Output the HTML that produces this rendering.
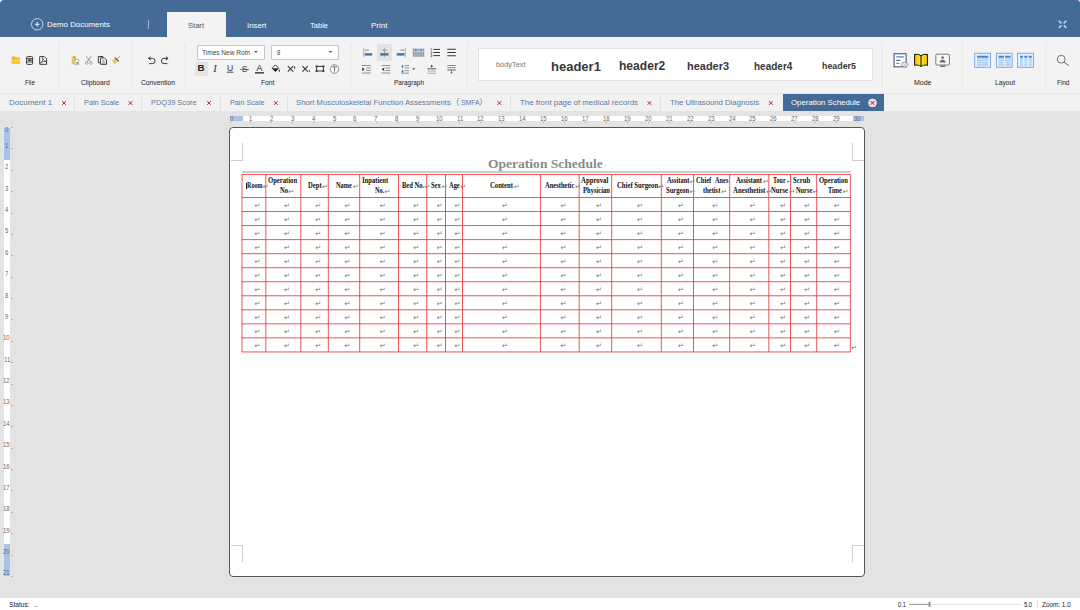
<!DOCTYPE html>
<html lang="en"><head><meta charset="utf-8"><title>Operation Schedule</title>
<style>
html,body{margin:0;padding:0;}
body{width:1080px;height:610px;overflow:hidden;position:relative;background:#e3e3e3;font-family:'Liberation Sans', sans-serif;}
.t{position:absolute;white-space:pre;}
.r{position:absolute;}
svg{position:absolute;overflow:visible;}
</style></head><body>
<div class="r" style="left:0px;top:0px;width:10.00px;height:10.00px;background:#fff;"></div>
<div class="r" style="left:1070px;top:0px;width:10.00px;height:10.00px;background:#fff;"></div>
<div class="r" style="left:0px;top:0px;width:1080.00px;height:36.60px;background:#446a96;border-radius:4px 3px 0 0;"></div>
<div class="r" style="left:166.5px;top:11.7px;width:59.10px;height:25.30px;background:#f3f3f3;"></div>
<span class="t" style="left:47.00px;top:19.80px;font:400 8px/9.6px 'Liberation Sans', sans-serif;transform:scaleX(0.9839);transform-origin:0 50%;color:#fff;">Demo Documents</span>
<span class="t" style="left:188.00px;top:21.00px;font:400 8px/9.6px 'Liberation Sans', sans-serif;transform:scaleX(0.9464);transform-origin:0 50%;color:#555;">Start</span>
<span class="t" style="left:247.00px;top:21.00px;font:400 8px/9.6px 'Liberation Sans', sans-serif;transform:scaleX(0.9742);transform-origin:0 50%;color:#fff;">Insert</span>
<span class="t" style="left:309.50px;top:21.00px;font:400 8px/9.6px 'Liberation Sans', sans-serif;transform:scaleX(0.9412);transform-origin:0 50%;color:#fff;">Table</span>
<span class="t" style="left:370.50px;top:21.00px;font:400 8px/9.6px 'Liberation Sans', sans-serif;transform:scaleX(1.0028);transform-origin:0 50%;color:#fff;">Print</span>
<div class="r" style="left:148px;top:19.5px;width:0.80px;height:9.00px;background:#a3b8d3;"></div>
<div class="r" style="left:0px;top:36.6px;width:1080.00px;height:56.90px;background:#f3f3f3;"></div>
<div class="r" style="left:0px;top:93px;width:1080.00px;height:1.00px;background:#e3e3e3;"></div>
<div class="r" style="left:0px;top:94px;width:1080.00px;height:17.30px;background:#f1f1f1;"></div>
<span class="t" style="left:24.70px;top:78.76px;font:400 6.9px/8.28px 'Liberation Sans', sans-serif;transform:scaleX(0.8821);transform-origin:0 50%;color:#222;">File</span>
<span class="t" style="left:81.20px;top:78.76px;font:400 6.9px/8.28px 'Liberation Sans', sans-serif;transform:scaleX(0.9763);transform-origin:0 50%;color:#222;">Clipboard</span>
<span class="t" style="left:141.30px;top:78.76px;font:400 6.9px/8.28px 'Liberation Sans', sans-serif;transform:scaleX(0.9749);transform-origin:0 50%;color:#222;">Convention</span>
<span class="t" style="left:261.20px;top:78.76px;font:400 6.9px/8.28px 'Liberation Sans', sans-serif;transform:scaleX(0.9785);transform-origin:0 50%;color:#222;">Font</span>
<span class="t" style="left:393.80px;top:78.76px;font:400 6.9px/8.28px 'Liberation Sans', sans-serif;transform:scaleX(0.9320);transform-origin:0 50%;color:#222;">Paragraph</span>
<span class="t" style="left:913.60px;top:78.76px;font:400 6.9px/8.28px 'Liberation Sans', sans-serif;transform:scaleX(1.0087);transform-origin:0 50%;color:#222;">Mode</span>
<span class="t" style="left:994.50px;top:78.76px;font:400 6.9px/8.28px 'Liberation Sans', sans-serif;transform:scaleX(0.9660);transform-origin:0 50%;color:#222;">Layout</span>
<span class="t" style="left:1056.80px;top:78.76px;font:400 6.9px/8.28px 'Liberation Sans', sans-serif;transform:scaleX(0.9249);transform-origin:0 50%;color:#222;">Find</span>
<div class="r" style="left:197px;top:45px;width:67.50px;height:14.50px;background:#fff;border:1px solid #c6c6c6;box-sizing:border-box;border-radius:1px;"></div>
<div class="r" style="left:271px;top:45px;width:67.70px;height:14.50px;background:#fff;border:1px solid #c6c6c6;box-sizing:border-box;border-radius:1px;"></div>
<span class="t" style="left:202.00px;top:49.06px;font:400 6.9px/8.28px 'Liberation Sans', sans-serif;transform:scaleX(0.9473);transform-origin:0 50%;color:#444;">Times New Rom</span>
<span class="t" style="left:276.70px;top:49.06px;font:400 6.9px/8.28px 'Liberation Sans', sans-serif;transform:scaleX(0.8585);transform-origin:0 50%;color:#444;">8</span>
<div class="r" style="left:477.5px;top:48.3px;width:395.50px;height:32.70px;background:#fff;border:1px solid #e2e2e2;box-sizing:border-box;"></div>
<span class="t" style="left:495.50px;top:60.44px;font:400 7.6px/9.12px 'Liberation Sans', sans-serif;transform:scaleX(0.9702);transform-origin:0 50%;color:#777;">bodyText</span>
<span class="t" style="left:550.50px;top:58.64px;font:700 13.6px/16.32px 'Liberation Sans', sans-serif;transform:scaleX(0.9570);transform-origin:0 50%;color:#383838;">header1</span>
<span class="t" style="left:618.70px;top:59.24px;font:700 12.6px/15.12px 'Liberation Sans', sans-serif;transform:scaleX(0.9583);transform-origin:0 50%;color:#383838;">header2</span>
<span class="t" style="left:686.50px;top:59.90px;font:700 11.5px/13.8px 'Liberation Sans', sans-serif;transform:scaleX(0.9544);transform-origin:0 50%;color:#383838;">header3</span>
<span class="t" style="left:754.00px;top:60.56px;font:700 10.4px/12.48px 'Liberation Sans', sans-serif;transform:scaleX(0.9634);transform-origin:0 50%;color:#383838;">header4</span>
<span class="t" style="left:822.00px;top:61.28px;font:700 9.2px/11.04px 'Liberation Sans', sans-serif;transform:scaleX(0.9645);transform-origin:0 50%;color:#383838;">header5</span>
<span class="t" style="left:8.90px;top:98.30px;font:400 8px/9.6px 'Liberation Sans', sans-serif;transform:scaleX(0.9991);transform-origin:0 50%;color:#5d789f;">Document 1</span>
<span class="t" style="left:84.00px;top:98.30px;font:400 8px/9.6px 'Liberation Sans', sans-serif;transform:scaleX(0.9150);transform-origin:0 50%;color:#5d789f;">Pain Scale</span>
<span class="t" style="left:151.40px;top:98.30px;font:400 8px/9.6px 'Liberation Sans', sans-serif;transform:scaleX(0.9238);transform-origin:0 50%;color:#5d789f;">PDQ39 Score</span>
<span class="t" style="left:229.50px;top:98.30px;font:400 8px/9.6px 'Liberation Sans', sans-serif;transform:scaleX(0.9020);transform-origin:0 50%;color:#5d789f;">Pain Scale</span>
<span class="t" style="left:519.50px;top:98.30px;font:400 8px/9.6px 'Liberation Sans', sans-serif;transform:scaleX(0.9864);transform-origin:0 50%;color:#5d789f;">The front page of medical records</span>
<span class="t" style="left:670.00px;top:98.30px;font:400 8px/9.6px 'Liberation Sans', sans-serif;transform:scaleX(0.9669);transform-origin:0 50%;color:#5d789f;">The Ultrasound Diagnosis</span>
<span class="t" style="left:296.00px;top:98.30px;font:400 8px/9.6px 'Liberation Sans', sans-serif;transform:scaleX(0.9644);transform-origin:0 50%;color:#5d789f;">Short Musculoskeletal Function Assessments</span>
<span class="t" style="left:451.40px;top:98.30px;font:400 8px/9.6px 'Liberation Sans', 'Noto Sans CJK SC', sans-serif;color:#5d789f;">（</span>
<span class="t" style="left:460.50px;top:98.30px;font:400 8px/9.6px 'Liberation Sans', sans-serif;transform:scaleX(0.8585);transform-origin:0 50%;color:#5d789f;">SMFA</span>
<span class="t" style="left:479.20px;top:98.30px;font:400 8px/9.6px 'Liberation Sans', 'Noto Sans CJK SC', sans-serif;color:#5d789f;">）</span>
<div class="r" style="left:782.5px;top:94px;width:101.00px;height:17.30px;background:#446a96;"></div>
<span class="t" style="left:791.40px;top:98.30px;font:400 8px/9.6px 'Liberation Sans', sans-serif;transform:scaleX(0.9785);transform-origin:0 50%;color:#fff;">Operation Schedule</span>
<div class="r" style="left:73.9px;top:96px;width:1.00px;height:15.00px;background:#e2e2e2;"></div>
<div class="r" style="left:141.2px;top:96px;width:1.00px;height:15.00px;background:#e2e2e2;"></div>
<div class="r" style="left:219.8px;top:96px;width:1.00px;height:15.00px;background:#e2e2e2;"></div>
<div class="r" style="left:286.5px;top:96px;width:1.00px;height:15.00px;background:#e2e2e2;"></div>
<div class="r" style="left:509.8px;top:96px;width:1.00px;height:15.00px;background:#e2e2e2;"></div>
<div class="r" style="left:660.0px;top:96px;width:1.00px;height:15.00px;background:#e2e2e2;"></div>
<div class="r" style="left:229.1px;top:127.2px;width:635.70px;height:450.00px;background:#fff;border:1px solid #555;box-sizing:border-box;border-radius:4px;"></div>
<div class="r" style="left:0px;top:597.7px;width:1080.00px;height:12.30px;background:#fff;"></div>
<span class="t" style="left:9.00px;top:601.06px;font:400 6.9px/8.28px 'Liberation Sans', sans-serif;transform:scaleX(0.9556);transform-origin:0 50%;color:#222;">Status:</span>
<span class="t" style="left:34.00px;top:601.06px;font:400 6.9px/8.28px 'Liberation Sans', sans-serif;transform:scaleX(1.0407);transform-origin:0 50%;color:#222;">..</span>
<span class="t" style="left:897.60px;top:601.06px;font:400 6.9px/8.28px 'Liberation Sans', sans-serif;transform:scaleX(0.8235);transform-origin:0 50%;color:#222;">0.1</span>
<span class="t" style="left:1024.00px;top:601.06px;font:400 6.9px/8.28px 'Liberation Sans', sans-serif;transform:scaleX(0.8339);transform-origin:0 50%;color:#222;">5.0</span>
<span class="t" style="left:1042.00px;top:601.06px;font:400 6.9px/8.28px 'Liberation Sans', sans-serif;transform:scaleX(0.9249);transform-origin:0 50%;color:#222;">Zoom: 1.0</span>
<div class="r" style="left:229.7px;top:115.5px;width:634.10px;height:5.80px;background:#fff;"></div>
<div class="r" style="left:229.7px;top:115.5px;width:13.10px;height:5.80px;background:#aac4e8;"></div>
<div class="r" style="left:852.5px;top:115.5px;width:11.30px;height:5.80px;background:#aac4e8;"></div>
<span class="t" style="left:230.34px;top:115.42px;font:400 6.8px/8.16px 'Liberation Sans', sans-serif;transform:scaleX(0.8800);transform-origin:0 50%;color:#666;">0</span>
<div class="r" style="left:229.9px;top:122.2px;width:0.80px;height:1.30px;background:#aaa;"></div>
<span class="t" style="left:248.84px;top:115.42px;font:400 6.8px/8.16px 'Liberation Sans', sans-serif;transform:scaleX(0.8800);transform-origin:0 50%;color:#666;">1</span>
<div class="r" style="left:250.1px;top:122.2px;width:0.80px;height:1.30px;background:#aaa;"></div>
<span class="t" style="left:269.77px;top:115.42px;font:400 6.8px/8.16px 'Liberation Sans', sans-serif;transform:scaleX(0.8800);transform-origin:0 50%;color:#666;">2</span>
<div class="r" style="left:271.03000000000003px;top:122.2px;width:0.80px;height:1.30px;background:#aaa;"></div>
<span class="t" style="left:290.70px;top:115.42px;font:400 6.8px/8.16px 'Liberation Sans', sans-serif;transform:scaleX(0.8800);transform-origin:0 50%;color:#666;">3</span>
<div class="r" style="left:291.96000000000004px;top:122.2px;width:0.80px;height:1.30px;background:#aaa;"></div>
<span class="t" style="left:311.63px;top:115.42px;font:400 6.8px/8.16px 'Liberation Sans', sans-serif;transform:scaleX(0.8800);transform-origin:0 50%;color:#666;">4</span>
<div class="r" style="left:312.89px;top:122.2px;width:0.80px;height:1.30px;background:#aaa;"></div>
<span class="t" style="left:332.56px;top:115.42px;font:400 6.8px/8.16px 'Liberation Sans', sans-serif;transform:scaleX(0.8800);transform-origin:0 50%;color:#666;">5</span>
<div class="r" style="left:333.82000000000005px;top:122.2px;width:0.80px;height:1.30px;background:#aaa;"></div>
<span class="t" style="left:353.49px;top:115.42px;font:400 6.8px/8.16px 'Liberation Sans', sans-serif;transform:scaleX(0.8800);transform-origin:0 50%;color:#666;">6</span>
<div class="r" style="left:354.75px;top:122.2px;width:0.80px;height:1.30px;background:#aaa;"></div>
<span class="t" style="left:374.42px;top:115.42px;font:400 6.8px/8.16px 'Liberation Sans', sans-serif;transform:scaleX(0.8800);transform-origin:0 50%;color:#666;">7</span>
<div class="r" style="left:375.68px;top:122.2px;width:0.80px;height:1.30px;background:#aaa;"></div>
<span class="t" style="left:395.35px;top:115.42px;font:400 6.8px/8.16px 'Liberation Sans', sans-serif;transform:scaleX(0.8800);transform-origin:0 50%;color:#666;">8</span>
<div class="r" style="left:396.61px;top:122.2px;width:0.80px;height:1.30px;background:#aaa;"></div>
<span class="t" style="left:416.28px;top:115.42px;font:400 6.8px/8.16px 'Liberation Sans', sans-serif;transform:scaleX(0.8800);transform-origin:0 50%;color:#666;">9</span>
<div class="r" style="left:417.54px;top:122.2px;width:0.80px;height:1.30px;background:#aaa;"></div>
<span class="t" style="left:435.54px;top:115.42px;font:400 6.8px/8.16px 'Liberation Sans', sans-serif;transform:scaleX(0.8800);transform-origin:0 50%;color:#666;">10</span>
<div class="r" style="left:438.47px;top:122.2px;width:0.80px;height:1.30px;background:#aaa;"></div>
<span class="t" style="left:456.69px;top:115.42px;font:400 6.8px/8.16px 'Liberation Sans', sans-serif;transform:scaleX(0.8800);transform-origin:0 50%;color:#666;">11</span>
<div class="r" style="left:459.4px;top:122.2px;width:0.80px;height:1.30px;background:#aaa;"></div>
<span class="t" style="left:477.40px;top:115.42px;font:400 6.8px/8.16px 'Liberation Sans', sans-serif;transform:scaleX(0.8800);transform-origin:0 50%;color:#666;">12</span>
<div class="r" style="left:480.33000000000004px;top:122.2px;width:0.80px;height:1.30px;background:#aaa;"></div>
<span class="t" style="left:498.33px;top:115.42px;font:400 6.8px/8.16px 'Liberation Sans', sans-serif;transform:scaleX(0.8800);transform-origin:0 50%;color:#666;">13</span>
<div class="r" style="left:501.26px;top:122.2px;width:0.80px;height:1.30px;background:#aaa;"></div>
<span class="t" style="left:519.26px;top:115.42px;font:400 6.8px/8.16px 'Liberation Sans', sans-serif;transform:scaleX(0.8800);transform-origin:0 50%;color:#666;">14</span>
<div class="r" style="left:522.1899999999999px;top:122.2px;width:0.80px;height:1.30px;background:#aaa;"></div>
<span class="t" style="left:540.19px;top:115.42px;font:400 6.8px/8.16px 'Liberation Sans', sans-serif;transform:scaleX(0.8800);transform-origin:0 50%;color:#666;">15</span>
<div class="r" style="left:543.12px;top:122.2px;width:0.80px;height:1.30px;background:#aaa;"></div>
<span class="t" style="left:561.12px;top:115.42px;font:400 6.8px/8.16px 'Liberation Sans', sans-serif;transform:scaleX(0.8800);transform-origin:0 50%;color:#666;">16</span>
<div class="r" style="left:564.0500000000001px;top:122.2px;width:0.80px;height:1.30px;background:#aaa;"></div>
<span class="t" style="left:582.05px;top:115.42px;font:400 6.8px/8.16px 'Liberation Sans', sans-serif;transform:scaleX(0.8800);transform-origin:0 50%;color:#666;">17</span>
<div class="r" style="left:584.98px;top:122.2px;width:0.80px;height:1.30px;background:#aaa;"></div>
<span class="t" style="left:602.98px;top:115.42px;font:400 6.8px/8.16px 'Liberation Sans', sans-serif;transform:scaleX(0.8800);transform-origin:0 50%;color:#666;">18</span>
<div class="r" style="left:605.91px;top:122.2px;width:0.80px;height:1.30px;background:#aaa;"></div>
<span class="t" style="left:623.91px;top:115.42px;font:400 6.8px/8.16px 'Liberation Sans', sans-serif;transform:scaleX(0.8800);transform-origin:0 50%;color:#666;">19</span>
<div class="r" style="left:626.84px;top:122.2px;width:0.80px;height:1.30px;background:#aaa;"></div>
<span class="t" style="left:644.84px;top:115.42px;font:400 6.8px/8.16px 'Liberation Sans', sans-serif;transform:scaleX(0.8800);transform-origin:0 50%;color:#666;">20</span>
<div class="r" style="left:647.7700000000001px;top:122.2px;width:0.80px;height:1.30px;background:#aaa;"></div>
<span class="t" style="left:665.77px;top:115.42px;font:400 6.8px/8.16px 'Liberation Sans', sans-serif;transform:scaleX(0.8800);transform-origin:0 50%;color:#666;">21</span>
<div class="r" style="left:668.6999999999999px;top:122.2px;width:0.80px;height:1.30px;background:#aaa;"></div>
<span class="t" style="left:686.70px;top:115.42px;font:400 6.8px/8.16px 'Liberation Sans', sans-serif;transform:scaleX(0.8800);transform-origin:0 50%;color:#666;">22</span>
<div class="r" style="left:689.63px;top:122.2px;width:0.80px;height:1.30px;background:#aaa;"></div>
<span class="t" style="left:707.63px;top:115.42px;font:400 6.8px/8.16px 'Liberation Sans', sans-serif;transform:scaleX(0.8800);transform-origin:0 50%;color:#666;">23</span>
<div class="r" style="left:710.5600000000001px;top:122.2px;width:0.80px;height:1.30px;background:#aaa;"></div>
<span class="t" style="left:728.56px;top:115.42px;font:400 6.8px/8.16px 'Liberation Sans', sans-serif;transform:scaleX(0.8800);transform-origin:0 50%;color:#666;">24</span>
<div class="r" style="left:731.49px;top:122.2px;width:0.80px;height:1.30px;background:#aaa;"></div>
<span class="t" style="left:749.49px;top:115.42px;font:400 6.8px/8.16px 'Liberation Sans', sans-serif;transform:scaleX(0.8800);transform-origin:0 50%;color:#666;">25</span>
<div class="r" style="left:752.42px;top:122.2px;width:0.80px;height:1.30px;background:#aaa;"></div>
<span class="t" style="left:770.42px;top:115.42px;font:400 6.8px/8.16px 'Liberation Sans', sans-serif;transform:scaleX(0.8800);transform-origin:0 50%;color:#666;">26</span>
<div class="r" style="left:773.35px;top:122.2px;width:0.80px;height:1.30px;background:#aaa;"></div>
<span class="t" style="left:791.35px;top:115.42px;font:400 6.8px/8.16px 'Liberation Sans', sans-serif;transform:scaleX(0.8800);transform-origin:0 50%;color:#666;">27</span>
<div class="r" style="left:794.2800000000001px;top:122.2px;width:0.80px;height:1.30px;background:#aaa;"></div>
<span class="t" style="left:812.28px;top:115.42px;font:400 6.8px/8.16px 'Liberation Sans', sans-serif;transform:scaleX(0.8800);transform-origin:0 50%;color:#666;">28</span>
<div class="r" style="left:815.2099999999999px;top:122.2px;width:0.80px;height:1.30px;background:#aaa;"></div>
<span class="t" style="left:833.21px;top:115.42px;font:400 6.8px/8.16px 'Liberation Sans', sans-serif;transform:scaleX(0.8800);transform-origin:0 50%;color:#666;">29</span>
<div class="r" style="left:836.14px;top:122.2px;width:0.80px;height:1.30px;background:#aaa;"></div>
<span class="t" style="left:854.14px;top:115.42px;font:400 6.8px/8.16px 'Liberation Sans', sans-serif;transform:scaleX(0.8800);transform-origin:0 50%;color:#666;">30</span>
<div class="r" style="left:857.07px;top:122.2px;width:0.80px;height:1.30px;background:#aaa;"></div>
<div class="r" style="left:3.9px;top:127.8px;width:6.20px;height:448.20px;background:#fff;"></div>
<div class="r" style="left:3.9px;top:127.8px;width:6.20px;height:32.00px;background:#aac4e8;"></div>
<div class="r" style="left:3.9px;top:543.9px;width:6.20px;height:32.10px;background:#aac4e8;"></div>
<span class="t" style="left:5.04px;top:125.92px;font:400 6.8px/8.16px 'Liberation Sans', sans-serif;transform:scaleX(0.8800);transform-origin:0 50%;color:#666;">0</span>
<div class="r" style="left:10.6px;top:127.0px;width:2.30px;height:0.80px;background:#b4b4b4;"></div>
<span class="t" style="left:5.04px;top:141.90px;font:400 6.8px/8.16px 'Liberation Sans', sans-serif;transform:scaleX(0.8800);transform-origin:0 50%;color:#666;">1</span>
<div class="r" style="left:10.6px;top:148.376px;width:2.30px;height:0.80px;background:#b4b4b4;"></div>
<span class="t" style="left:5.04px;top:163.27px;font:400 6.8px/8.16px 'Liberation Sans', sans-serif;transform:scaleX(0.8800);transform-origin:0 50%;color:#666;">2</span>
<div class="r" style="left:10.6px;top:169.752px;width:2.30px;height:0.80px;background:#b4b4b4;"></div>
<span class="t" style="left:5.04px;top:184.65px;font:400 6.8px/8.16px 'Liberation Sans', sans-serif;transform:scaleX(0.8800);transform-origin:0 50%;color:#666;">3</span>
<div class="r" style="left:10.6px;top:191.12800000000001px;width:2.30px;height:0.80px;background:#b4b4b4;"></div>
<span class="t" style="left:5.04px;top:206.02px;font:400 6.8px/8.16px 'Liberation Sans', sans-serif;transform:scaleX(0.8800);transform-origin:0 50%;color:#666;">4</span>
<div class="r" style="left:10.6px;top:212.504px;width:2.30px;height:0.80px;background:#b4b4b4;"></div>
<span class="t" style="left:5.04px;top:227.40px;font:400 6.8px/8.16px 'Liberation Sans', sans-serif;transform:scaleX(0.8800);transform-origin:0 50%;color:#666;">5</span>
<div class="r" style="left:10.6px;top:233.88000000000002px;width:2.30px;height:0.80px;background:#b4b4b4;"></div>
<span class="t" style="left:5.04px;top:248.78px;font:400 6.8px/8.16px 'Liberation Sans', sans-serif;transform:scaleX(0.8800);transform-origin:0 50%;color:#666;">6</span>
<div class="r" style="left:10.6px;top:255.256px;width:2.30px;height:0.80px;background:#b4b4b4;"></div>
<span class="t" style="left:5.04px;top:270.15px;font:400 6.8px/8.16px 'Liberation Sans', sans-serif;transform:scaleX(0.8800);transform-origin:0 50%;color:#666;">7</span>
<div class="r" style="left:10.6px;top:276.63200000000006px;width:2.30px;height:0.80px;background:#b4b4b4;"></div>
<span class="t" style="left:5.04px;top:291.53px;font:400 6.8px/8.16px 'Liberation Sans', sans-serif;transform:scaleX(0.8800);transform-origin:0 50%;color:#666;">8</span>
<div class="r" style="left:10.6px;top:298.00800000000004px;width:2.30px;height:0.80px;background:#b4b4b4;"></div>
<span class="t" style="left:5.04px;top:312.90px;font:400 6.8px/8.16px 'Liberation Sans', sans-serif;transform:scaleX(0.8800);transform-origin:0 50%;color:#666;">9</span>
<div class="r" style="left:10.6px;top:319.384px;width:2.30px;height:0.80px;background:#b4b4b4;"></div>
<span class="t" style="left:3.37px;top:334.28px;font:400 6.8px/8.16px 'Liberation Sans', sans-serif;transform:scaleX(0.8800);transform-origin:0 50%;color:#666;">10</span>
<div class="r" style="left:10.6px;top:340.76000000000005px;width:2.30px;height:0.80px;background:#b4b4b4;"></div>
<span class="t" style="left:3.59px;top:355.66px;font:400 6.8px/8.16px 'Liberation Sans', sans-serif;transform:scaleX(0.8800);transform-origin:0 50%;color:#666;">11</span>
<div class="r" style="left:10.6px;top:362.1360000000001px;width:2.30px;height:0.80px;background:#b4b4b4;"></div>
<span class="t" style="left:3.37px;top:377.03px;font:400 6.8px/8.16px 'Liberation Sans', sans-serif;transform:scaleX(0.8800);transform-origin:0 50%;color:#666;">12</span>
<div class="r" style="left:10.6px;top:383.51200000000006px;width:2.30px;height:0.80px;background:#b4b4b4;"></div>
<span class="t" style="left:3.37px;top:398.41px;font:400 6.8px/8.16px 'Liberation Sans', sans-serif;transform:scaleX(0.8800);transform-origin:0 50%;color:#666;">13</span>
<div class="r" style="left:10.6px;top:404.88800000000003px;width:2.30px;height:0.80px;background:#b4b4b4;"></div>
<span class="t" style="left:3.37px;top:419.78px;font:400 6.8px/8.16px 'Liberation Sans', sans-serif;transform:scaleX(0.8800);transform-origin:0 50%;color:#666;">14</span>
<div class="r" style="left:10.6px;top:426.264px;width:2.30px;height:0.80px;background:#b4b4b4;"></div>
<span class="t" style="left:3.37px;top:441.16px;font:400 6.8px/8.16px 'Liberation Sans', sans-serif;transform:scaleX(0.8800);transform-origin:0 50%;color:#666;">15</span>
<div class="r" style="left:10.6px;top:447.6400000000001px;width:2.30px;height:0.80px;background:#b4b4b4;"></div>
<span class="t" style="left:3.37px;top:462.54px;font:400 6.8px/8.16px 'Liberation Sans', sans-serif;transform:scaleX(0.8800);transform-origin:0 50%;color:#666;">16</span>
<div class="r" style="left:10.6px;top:469.0160000000001px;width:2.30px;height:0.80px;background:#b4b4b4;"></div>
<span class="t" style="left:3.37px;top:483.91px;font:400 6.8px/8.16px 'Liberation Sans', sans-serif;transform:scaleX(0.8800);transform-origin:0 50%;color:#666;">17</span>
<div class="r" style="left:10.6px;top:490.39200000000005px;width:2.30px;height:0.80px;background:#b4b4b4;"></div>
<span class="t" style="left:3.37px;top:505.29px;font:400 6.8px/8.16px 'Liberation Sans', sans-serif;transform:scaleX(0.8800);transform-origin:0 50%;color:#666;">18</span>
<div class="r" style="left:10.6px;top:511.76800000000003px;width:2.30px;height:0.80px;background:#b4b4b4;"></div>
<span class="t" style="left:3.37px;top:526.66px;font:400 6.8px/8.16px 'Liberation Sans', sans-serif;transform:scaleX(0.8800);transform-origin:0 50%;color:#666;">19</span>
<div class="r" style="left:10.6px;top:533.144px;width:2.30px;height:0.80px;background:#b4b4b4;"></div>
<span class="t" style="left:3.37px;top:548.04px;font:400 6.8px/8.16px 'Liberation Sans', sans-serif;transform:scaleX(0.8800);transform-origin:0 50%;color:#666;">20</span>
<div class="r" style="left:10.6px;top:554.5200000000001px;width:2.30px;height:0.80px;background:#b4b4b4;"></div>
<span class="t" style="left:3.37px;top:569.42px;font:400 6.8px/8.16px 'Liberation Sans', sans-serif;transform:scaleX(0.8800);transform-origin:0 50%;color:#666;">21</span>
<div class="r" style="left:10.6px;top:575.8960000000001px;width:2.30px;height:0.80px;background:#b4b4b4;"></div>
<div class="r" style="left:242.2px;top:142.5px;width:0.80px;height:17.80px;background:#cfcfcf;"></div>
<div class="r" style="left:230.5px;top:159.5px;width:12.50px;height:0.80px;background:#cfcfcf;"></div>
<div class="r" style="left:852px;top:142.5px;width:0.80px;height:17.80px;background:#cfcfcf;"></div>
<div class="r" style="left:852px;top:159.5px;width:11.50px;height:0.80px;background:#cfcfcf;"></div>
<div class="r" style="left:242.2px;top:545px;width:0.80px;height:16.80px;background:#cfcfcf;"></div>
<div class="r" style="left:230.5px;top:545px;width:12.50px;height:0.80px;background:#cfcfcf;"></div>
<div class="r" style="left:852px;top:545px;width:0.80px;height:16.80px;background:#cfcfcf;"></div>
<div class="r" style="left:852px;top:545px;width:11.50px;height:0.80px;background:#cfcfcf;"></div>
<div class="r" style="left:242px;top:171.4px;width:609.00px;height:1.50px;background:#cbcbcb;"></div>
<span class="t" style="left:488.30px;top:156.20px;font:700 13.5px/16.2px 'Liberation Serif', serif;transform:scaleX(1.0027);transform-origin:0 50%;color:#8a8a8a;">Operation Schedule</span>
<span class="t" style="left:604.2px;top:163.4px;font:400 3.6px/6px 'DejaVu Sans',sans-serif;color:#b5b5b5;">↵</span>
<svg width="1080" height="610" viewBox="0 0 1080 610" style="left:0;top:0"><path d="M241.60 174.50H850.70M241.60 197.50H850.70M241.60 211.54H850.70M241.60 225.58H850.70M241.60 239.62H850.70M241.60 253.66H850.70M241.60 267.70H850.70M241.60 281.74H850.70M241.60 295.78H850.70M241.60 309.82H850.70M241.60 323.86H850.70M241.60 337.90H850.70M241.60 351.94H850.70M242.00 174.50V351.94M265.80 174.50V351.94M300.80 174.50V351.94M328.30 174.50V351.94M359.70 174.50V351.94M398.50 174.50V351.94M426.70 174.50V351.94M445.50 174.50V351.94M462.50 174.50V351.94M540.40 174.50V351.94M579.20 174.50V351.94M611.70 174.50V351.94M661.30 174.50V351.94M693.50 174.50V351.94M729.70 174.50V351.94M768.80 174.50V351.94M790.50 174.50V351.94M816.70 174.50V351.94M850.30 174.50V351.94" stroke="#e5393c" stroke-width="0.85" fill="none"/></svg>
<span class="t" style="left:246.70px;top:181.88px;font:700 7.2px/8.64px 'Liberation Serif', serif;transform:scaleX(0.8435);transform-origin:0 50%;color:#111;">Room</span>
<span class="t" style="left:262.80px;top:182.60px;font:400 7.2px/8px 'DejaVu Sans',sans-serif;color:#7a7a7a;">↵</span>
<span class="t" style="left:268.40px;top:177.38px;font:700 7.2px/8.64px 'Liberation Serif', serif;transform:scaleX(0.9224);transform-origin:0 50%;color:#111;">Operation</span>
<span class="t" style="left:279.70px;top:186.78px;font:700 7.2px/8.64px 'Liberation Serif', serif;transform:scaleX(0.9094);transform-origin:0 50%;color:#111;">No</span>
<span class="t" style="left:288.30px;top:187.50px;font:400 7.2px/8px 'DejaVu Sans',sans-serif;color:#7a7a7a;">↵</span>
<span class="t" style="left:307.90px;top:181.88px;font:700 7.2px/8.64px 'Liberation Serif', serif;transform:scaleX(0.9201);transform-origin:0 50%;color:#111;">Dept</span>
<span class="t" style="left:322.10px;top:182.60px;font:400 7.2px/8px 'DejaVu Sans',sans-serif;color:#7a7a7a;">↵</span>
<span class="t" style="left:336.30px;top:181.88px;font:700 7.2px/8.64px 'Liberation Serif', serif;transform:scaleX(0.8793);transform-origin:0 50%;color:#111;">Name</span>
<span class="t" style="left:352.70px;top:182.60px;font:400 7.2px/8px 'DejaVu Sans',sans-serif;color:#7a7a7a;">↵</span>
<span class="t" style="left:361.90px;top:177.38px;font:700 7.2px/8.64px 'Liberation Serif', serif;transform:scaleX(0.9239);transform-origin:0 50%;color:#111;">Inpatient</span>
<span class="t" style="left:374.80px;top:186.78px;font:700 7.2px/8.64px 'Liberation Serif', serif;transform:scaleX(0.8684);transform-origin:0 50%;color:#111;">No.</span>
<span class="t" style="left:384.60px;top:187.50px;font:400 7.2px/8px 'DejaVu Sans',sans-serif;color:#7a7a7a;">↵</span>
<span class="t" style="left:401.70px;top:181.88px;font:700 7.2px/8.64px 'Liberation Serif', serif;transform:scaleX(0.9108);transform-origin:0 50%;color:#111;">Bed No.</span>
<span class="t" style="left:424.50px;top:182.60px;font:400 7.2px/8px 'DejaVu Sans',sans-serif;color:#7a7a7a;">↵</span>
<span class="t" style="left:431.30px;top:181.88px;font:700 7.2px/8.64px 'Liberation Serif', serif;transform:scaleX(0.8904);transform-origin:0 50%;color:#111;">Sex</span>
<span class="t" style="left:441.50px;top:182.60px;font:400 7.2px/8px 'DejaVu Sans',sans-serif;color:#7a7a7a;">↵</span>
<span class="t" style="left:449.00px;top:181.88px;font:700 7.2px/8.64px 'Liberation Serif', serif;transform:scaleX(0.8928);transform-origin:0 50%;color:#111;">Age</span>
<span class="t" style="left:460.30px;top:182.60px;font:400 7.2px/8px 'DejaVu Sans',sans-serif;color:#7a7a7a;">↵</span>
<span class="t" style="left:490.10px;top:181.88px;font:700 7.2px/8.64px 'Liberation Serif', serif;transform:scaleX(0.9287);transform-origin:0 50%;color:#111;">Content</span>
<span class="t" style="left:513.70px;top:182.60px;font:400 7.2px/8px 'DejaVu Sans',sans-serif;color:#7a7a7a;">↵</span>
<span class="t" style="left:545.00px;top:181.88px;font:700 7.2px/8.64px 'Liberation Serif', serif;transform:scaleX(0.9059);transform-origin:0 50%;color:#111;">Anesthetic</span>
<span class="t" style="left:574.90px;top:182.60px;font:400 7.2px/8px 'DejaVu Sans',sans-serif;color:#7a7a7a;">↵</span>
<span class="t" style="left:581.00px;top:177.38px;font:700 7.2px/8.64px 'Liberation Serif', serif;transform:scaleX(0.9404);transform-origin:0 50%;color:#111;">Approval</span>
<span class="t" style="left:583.10px;top:186.78px;font:700 7.2px/8.64px 'Liberation Serif', serif;transform:scaleX(0.9133);transform-origin:0 50%;color:#111;">Physician</span>
<span class="t" style="left:616.50px;top:181.88px;font:700 7.2px/8.64px 'Liberation Serif', serif;transform:scaleX(0.9334);transform-origin:0 50%;color:#111;">Chief Surgeon</span>
<span class="t" style="left:658.30px;top:182.60px;font:400 7.2px/8px 'DejaVu Sans',sans-serif;color:#7a7a7a;">↵</span>
<span class="t" style="left:666.60px;top:177.38px;font:700 7.2px/8.64px 'Liberation Serif', serif;transform:scaleX(0.8899);transform-origin:0 50%;color:#111;">Assitant</span>
<span class="t" style="left:689.60px;top:178.10px;font:400 7.2px/8px 'DejaVu Sans',sans-serif;color:#7a7a7a;">↵</span>
<span class="t" style="left:665.80px;top:186.78px;font:700 7.2px/8.64px 'Liberation Serif', serif;transform:scaleX(0.9076);transform-origin:0 50%;color:#111;">Surgeon</span>
<span class="t" style="left:689.60px;top:187.50px;font:400 7.2px/8px 'DejaVu Sans',sans-serif;color:#7a7a7a;">↵</span>
<span class="t" style="left:696.00px;top:177.38px;font:700 7.2px/8.64px 'Liberation Serif', serif;transform:scaleX(0.9117);transform-origin:0 50%;color:#111;">Chief</span>
<span class="t" style="left:715.20px;top:177.38px;font:700 7.2px/8.64px 'Liberation Serif', serif;transform:scaleX(0.8823);transform-origin:0 50%;color:#111;">Anes</span>
<span class="t" style="left:703.40px;top:186.78px;font:700 7.2px/8.64px 'Liberation Serif', serif;transform:scaleX(0.9024);transform-origin:0 50%;color:#111;">thetist</span>
<span class="t" style="left:721.30px;top:187.50px;font:400 7.2px/8px 'DejaVu Sans',sans-serif;color:#7a7a7a;">↵</span>
<span class="t" style="left:736.40px;top:177.38px;font:700 7.2px/8.64px 'Liberation Serif', serif;transform:scaleX(0.9296);transform-origin:0 50%;color:#111;">Assistant</span>
<span class="t" style="left:763.00px;top:178.10px;font:400 7.2px/8px 'DejaVu Sans',sans-serif;color:#7a7a7a;">↵</span>
<span class="t" style="left:733.30px;top:186.78px;font:700 7.2px/8.64px 'Liberation Serif', serif;transform:scaleX(0.9405);transform-origin:0 50%;color:#111;">Anesthetist</span>
<span class="t" style="left:766.20px;top:187.50px;font:400 7.2px/8px 'DejaVu Sans',sans-serif;color:#7a7a7a;">↵</span>
<span class="t" style="left:773.40px;top:177.38px;font:700 7.2px/8.64px 'Liberation Serif', serif;transform:scaleX(0.8444);transform-origin:0 50%;color:#111;">Tour</span>
<span class="t" style="left:786.60px;top:178.10px;font:400 7.2px/8px 'DejaVu Sans',sans-serif;color:#7a7a7a;">↵</span>
<span class="t" style="left:771.40px;top:186.78px;font:700 7.2px/8.64px 'Liberation Serif', serif;transform:scaleX(0.9252);transform-origin:0 50%;color:#111;">Nurse</span>
<span class="t" style="left:789.00px;top:187.50px;font:400 7.2px/8px 'DejaVu Sans',sans-serif;color:#7a7a7a;">↵</span>
<span class="t" style="left:793.10px;top:177.38px;font:700 7.2px/8.64px 'Liberation Serif', serif;transform:scaleX(0.9415);transform-origin:0 50%;color:#111;">Scrub</span>
<span class="t" style="left:795.80px;top:186.78px;font:700 7.2px/8.64px 'Liberation Serif', serif;transform:scaleX(0.8816);transform-origin:0 50%;color:#111;">Nurse</span>
<span class="t" style="left:812.60px;top:187.50px;font:400 7.2px/8px 'DejaVu Sans',sans-serif;color:#7a7a7a;">↵</span>
<span class="t" style="left:819.00px;top:177.38px;font:700 7.2px/8.64px 'Liberation Serif', serif;transform:scaleX(0.9161);transform-origin:0 50%;color:#111;">Operation</span>
<span class="t" style="left:828.00px;top:186.78px;font:700 7.2px/8.64px 'Liberation Serif', serif;transform:scaleX(0.8773);transform-origin:0 50%;color:#111;">Time</span>
<span class="t" style="left:842.50px;top:187.50px;font:400 7.2px/8px 'DejaVu Sans',sans-serif;color:#7a7a7a;">↵</span>
<div class="r" style="left:246.4px;top:183px;width:0.80px;height:5.80px;background:#111;"></div>
<span class="t" style="left:254.50px;top:201.82px;font:400 7.2px/8px 'DejaVu Sans',sans-serif;color:#7a7a7a;">↵</span>
<span class="t" style="left:283.90px;top:201.82px;font:400 7.2px/8px 'DejaVu Sans',sans-serif;color:#7a7a7a;">↵</span>
<span class="t" style="left:315.15px;top:201.82px;font:400 7.2px/8px 'DejaVu Sans',sans-serif;color:#7a7a7a;">↵</span>
<span class="t" style="left:344.60px;top:201.82px;font:400 7.2px/8px 'DejaVu Sans',sans-serif;color:#7a7a7a;">↵</span>
<span class="t" style="left:379.70px;top:201.82px;font:400 7.2px/8px 'DejaVu Sans',sans-serif;color:#7a7a7a;">↵</span>
<span class="t" style="left:413.20px;top:201.82px;font:400 7.2px/8px 'DejaVu Sans',sans-serif;color:#7a7a7a;">↵</span>
<span class="t" style="left:436.70px;top:201.82px;font:400 7.2px/8px 'DejaVu Sans',sans-serif;color:#7a7a7a;">↵</span>
<span class="t" style="left:454.60px;top:201.82px;font:400 7.2px/8px 'DejaVu Sans',sans-serif;color:#7a7a7a;">↵</span>
<span class="t" style="left:502.05px;top:201.82px;font:400 7.2px/8px 'DejaVu Sans',sans-serif;color:#7a7a7a;">↵</span>
<span class="t" style="left:560.40px;top:201.82px;font:400 7.2px/8px 'DejaVu Sans',sans-serif;color:#7a7a7a;">↵</span>
<span class="t" style="left:596.05px;top:201.82px;font:400 7.2px/8px 'DejaVu Sans',sans-serif;color:#7a7a7a;">↵</span>
<span class="t" style="left:637.10px;top:201.82px;font:400 7.2px/8px 'DejaVu Sans',sans-serif;color:#7a7a7a;">↵</span>
<span class="t" style="left:678.00px;top:201.82px;font:400 7.2px/8px 'DejaVu Sans',sans-serif;color:#7a7a7a;">↵</span>
<span class="t" style="left:712.20px;top:201.82px;font:400 7.2px/8px 'DejaVu Sans',sans-serif;color:#7a7a7a;">↵</span>
<span class="t" style="left:749.85px;top:201.82px;font:400 7.2px/8px 'DejaVu Sans',sans-serif;color:#7a7a7a;">↵</span>
<span class="t" style="left:780.25px;top:201.82px;font:400 7.2px/8px 'DejaVu Sans',sans-serif;color:#7a7a7a;">↵</span>
<span class="t" style="left:804.20px;top:201.82px;font:400 7.2px/8px 'DejaVu Sans',sans-serif;color:#7a7a7a;">↵</span>
<span class="t" style="left:834.10px;top:201.82px;font:400 7.2px/8px 'DejaVu Sans',sans-serif;color:#7a7a7a;">↵</span>
<span class="t" style="left:254.50px;top:215.86px;font:400 7.2px/8px 'DejaVu Sans',sans-serif;color:#7a7a7a;">↵</span>
<span class="t" style="left:283.90px;top:215.86px;font:400 7.2px/8px 'DejaVu Sans',sans-serif;color:#7a7a7a;">↵</span>
<span class="t" style="left:315.15px;top:215.86px;font:400 7.2px/8px 'DejaVu Sans',sans-serif;color:#7a7a7a;">↵</span>
<span class="t" style="left:344.60px;top:215.86px;font:400 7.2px/8px 'DejaVu Sans',sans-serif;color:#7a7a7a;">↵</span>
<span class="t" style="left:379.70px;top:215.86px;font:400 7.2px/8px 'DejaVu Sans',sans-serif;color:#7a7a7a;">↵</span>
<span class="t" style="left:413.20px;top:215.86px;font:400 7.2px/8px 'DejaVu Sans',sans-serif;color:#7a7a7a;">↵</span>
<span class="t" style="left:436.70px;top:215.86px;font:400 7.2px/8px 'DejaVu Sans',sans-serif;color:#7a7a7a;">↵</span>
<span class="t" style="left:454.60px;top:215.86px;font:400 7.2px/8px 'DejaVu Sans',sans-serif;color:#7a7a7a;">↵</span>
<span class="t" style="left:502.05px;top:215.86px;font:400 7.2px/8px 'DejaVu Sans',sans-serif;color:#7a7a7a;">↵</span>
<span class="t" style="left:560.40px;top:215.86px;font:400 7.2px/8px 'DejaVu Sans',sans-serif;color:#7a7a7a;">↵</span>
<span class="t" style="left:596.05px;top:215.86px;font:400 7.2px/8px 'DejaVu Sans',sans-serif;color:#7a7a7a;">↵</span>
<span class="t" style="left:637.10px;top:215.86px;font:400 7.2px/8px 'DejaVu Sans',sans-serif;color:#7a7a7a;">↵</span>
<span class="t" style="left:678.00px;top:215.86px;font:400 7.2px/8px 'DejaVu Sans',sans-serif;color:#7a7a7a;">↵</span>
<span class="t" style="left:712.20px;top:215.86px;font:400 7.2px/8px 'DejaVu Sans',sans-serif;color:#7a7a7a;">↵</span>
<span class="t" style="left:749.85px;top:215.86px;font:400 7.2px/8px 'DejaVu Sans',sans-serif;color:#7a7a7a;">↵</span>
<span class="t" style="left:780.25px;top:215.86px;font:400 7.2px/8px 'DejaVu Sans',sans-serif;color:#7a7a7a;">↵</span>
<span class="t" style="left:804.20px;top:215.86px;font:400 7.2px/8px 'DejaVu Sans',sans-serif;color:#7a7a7a;">↵</span>
<span class="t" style="left:834.10px;top:215.86px;font:400 7.2px/8px 'DejaVu Sans',sans-serif;color:#7a7a7a;">↵</span>
<span class="t" style="left:254.50px;top:229.90px;font:400 7.2px/8px 'DejaVu Sans',sans-serif;color:#7a7a7a;">↵</span>
<span class="t" style="left:283.90px;top:229.90px;font:400 7.2px/8px 'DejaVu Sans',sans-serif;color:#7a7a7a;">↵</span>
<span class="t" style="left:315.15px;top:229.90px;font:400 7.2px/8px 'DejaVu Sans',sans-serif;color:#7a7a7a;">↵</span>
<span class="t" style="left:344.60px;top:229.90px;font:400 7.2px/8px 'DejaVu Sans',sans-serif;color:#7a7a7a;">↵</span>
<span class="t" style="left:379.70px;top:229.90px;font:400 7.2px/8px 'DejaVu Sans',sans-serif;color:#7a7a7a;">↵</span>
<span class="t" style="left:413.20px;top:229.90px;font:400 7.2px/8px 'DejaVu Sans',sans-serif;color:#7a7a7a;">↵</span>
<span class="t" style="left:436.70px;top:229.90px;font:400 7.2px/8px 'DejaVu Sans',sans-serif;color:#7a7a7a;">↵</span>
<span class="t" style="left:454.60px;top:229.90px;font:400 7.2px/8px 'DejaVu Sans',sans-serif;color:#7a7a7a;">↵</span>
<span class="t" style="left:502.05px;top:229.90px;font:400 7.2px/8px 'DejaVu Sans',sans-serif;color:#7a7a7a;">↵</span>
<span class="t" style="left:560.40px;top:229.90px;font:400 7.2px/8px 'DejaVu Sans',sans-serif;color:#7a7a7a;">↵</span>
<span class="t" style="left:596.05px;top:229.90px;font:400 7.2px/8px 'DejaVu Sans',sans-serif;color:#7a7a7a;">↵</span>
<span class="t" style="left:637.10px;top:229.90px;font:400 7.2px/8px 'DejaVu Sans',sans-serif;color:#7a7a7a;">↵</span>
<span class="t" style="left:678.00px;top:229.90px;font:400 7.2px/8px 'DejaVu Sans',sans-serif;color:#7a7a7a;">↵</span>
<span class="t" style="left:712.20px;top:229.90px;font:400 7.2px/8px 'DejaVu Sans',sans-serif;color:#7a7a7a;">↵</span>
<span class="t" style="left:749.85px;top:229.90px;font:400 7.2px/8px 'DejaVu Sans',sans-serif;color:#7a7a7a;">↵</span>
<span class="t" style="left:780.25px;top:229.90px;font:400 7.2px/8px 'DejaVu Sans',sans-serif;color:#7a7a7a;">↵</span>
<span class="t" style="left:804.20px;top:229.90px;font:400 7.2px/8px 'DejaVu Sans',sans-serif;color:#7a7a7a;">↵</span>
<span class="t" style="left:834.10px;top:229.90px;font:400 7.2px/8px 'DejaVu Sans',sans-serif;color:#7a7a7a;">↵</span>
<span class="t" style="left:254.50px;top:243.94px;font:400 7.2px/8px 'DejaVu Sans',sans-serif;color:#7a7a7a;">↵</span>
<span class="t" style="left:283.90px;top:243.94px;font:400 7.2px/8px 'DejaVu Sans',sans-serif;color:#7a7a7a;">↵</span>
<span class="t" style="left:315.15px;top:243.94px;font:400 7.2px/8px 'DejaVu Sans',sans-serif;color:#7a7a7a;">↵</span>
<span class="t" style="left:344.60px;top:243.94px;font:400 7.2px/8px 'DejaVu Sans',sans-serif;color:#7a7a7a;">↵</span>
<span class="t" style="left:379.70px;top:243.94px;font:400 7.2px/8px 'DejaVu Sans',sans-serif;color:#7a7a7a;">↵</span>
<span class="t" style="left:413.20px;top:243.94px;font:400 7.2px/8px 'DejaVu Sans',sans-serif;color:#7a7a7a;">↵</span>
<span class="t" style="left:436.70px;top:243.94px;font:400 7.2px/8px 'DejaVu Sans',sans-serif;color:#7a7a7a;">↵</span>
<span class="t" style="left:454.60px;top:243.94px;font:400 7.2px/8px 'DejaVu Sans',sans-serif;color:#7a7a7a;">↵</span>
<span class="t" style="left:502.05px;top:243.94px;font:400 7.2px/8px 'DejaVu Sans',sans-serif;color:#7a7a7a;">↵</span>
<span class="t" style="left:560.40px;top:243.94px;font:400 7.2px/8px 'DejaVu Sans',sans-serif;color:#7a7a7a;">↵</span>
<span class="t" style="left:596.05px;top:243.94px;font:400 7.2px/8px 'DejaVu Sans',sans-serif;color:#7a7a7a;">↵</span>
<span class="t" style="left:637.10px;top:243.94px;font:400 7.2px/8px 'DejaVu Sans',sans-serif;color:#7a7a7a;">↵</span>
<span class="t" style="left:678.00px;top:243.94px;font:400 7.2px/8px 'DejaVu Sans',sans-serif;color:#7a7a7a;">↵</span>
<span class="t" style="left:712.20px;top:243.94px;font:400 7.2px/8px 'DejaVu Sans',sans-serif;color:#7a7a7a;">↵</span>
<span class="t" style="left:749.85px;top:243.94px;font:400 7.2px/8px 'DejaVu Sans',sans-serif;color:#7a7a7a;">↵</span>
<span class="t" style="left:780.25px;top:243.94px;font:400 7.2px/8px 'DejaVu Sans',sans-serif;color:#7a7a7a;">↵</span>
<span class="t" style="left:804.20px;top:243.94px;font:400 7.2px/8px 'DejaVu Sans',sans-serif;color:#7a7a7a;">↵</span>
<span class="t" style="left:834.10px;top:243.94px;font:400 7.2px/8px 'DejaVu Sans',sans-serif;color:#7a7a7a;">↵</span>
<span class="t" style="left:254.50px;top:257.98px;font:400 7.2px/8px 'DejaVu Sans',sans-serif;color:#7a7a7a;">↵</span>
<span class="t" style="left:283.90px;top:257.98px;font:400 7.2px/8px 'DejaVu Sans',sans-serif;color:#7a7a7a;">↵</span>
<span class="t" style="left:315.15px;top:257.98px;font:400 7.2px/8px 'DejaVu Sans',sans-serif;color:#7a7a7a;">↵</span>
<span class="t" style="left:344.60px;top:257.98px;font:400 7.2px/8px 'DejaVu Sans',sans-serif;color:#7a7a7a;">↵</span>
<span class="t" style="left:379.70px;top:257.98px;font:400 7.2px/8px 'DejaVu Sans',sans-serif;color:#7a7a7a;">↵</span>
<span class="t" style="left:413.20px;top:257.98px;font:400 7.2px/8px 'DejaVu Sans',sans-serif;color:#7a7a7a;">↵</span>
<span class="t" style="left:436.70px;top:257.98px;font:400 7.2px/8px 'DejaVu Sans',sans-serif;color:#7a7a7a;">↵</span>
<span class="t" style="left:454.60px;top:257.98px;font:400 7.2px/8px 'DejaVu Sans',sans-serif;color:#7a7a7a;">↵</span>
<span class="t" style="left:502.05px;top:257.98px;font:400 7.2px/8px 'DejaVu Sans',sans-serif;color:#7a7a7a;">↵</span>
<span class="t" style="left:560.40px;top:257.98px;font:400 7.2px/8px 'DejaVu Sans',sans-serif;color:#7a7a7a;">↵</span>
<span class="t" style="left:596.05px;top:257.98px;font:400 7.2px/8px 'DejaVu Sans',sans-serif;color:#7a7a7a;">↵</span>
<span class="t" style="left:637.10px;top:257.98px;font:400 7.2px/8px 'DejaVu Sans',sans-serif;color:#7a7a7a;">↵</span>
<span class="t" style="left:678.00px;top:257.98px;font:400 7.2px/8px 'DejaVu Sans',sans-serif;color:#7a7a7a;">↵</span>
<span class="t" style="left:712.20px;top:257.98px;font:400 7.2px/8px 'DejaVu Sans',sans-serif;color:#7a7a7a;">↵</span>
<span class="t" style="left:749.85px;top:257.98px;font:400 7.2px/8px 'DejaVu Sans',sans-serif;color:#7a7a7a;">↵</span>
<span class="t" style="left:780.25px;top:257.98px;font:400 7.2px/8px 'DejaVu Sans',sans-serif;color:#7a7a7a;">↵</span>
<span class="t" style="left:804.20px;top:257.98px;font:400 7.2px/8px 'DejaVu Sans',sans-serif;color:#7a7a7a;">↵</span>
<span class="t" style="left:834.10px;top:257.98px;font:400 7.2px/8px 'DejaVu Sans',sans-serif;color:#7a7a7a;">↵</span>
<span class="t" style="left:254.50px;top:272.02px;font:400 7.2px/8px 'DejaVu Sans',sans-serif;color:#7a7a7a;">↵</span>
<span class="t" style="left:283.90px;top:272.02px;font:400 7.2px/8px 'DejaVu Sans',sans-serif;color:#7a7a7a;">↵</span>
<span class="t" style="left:315.15px;top:272.02px;font:400 7.2px/8px 'DejaVu Sans',sans-serif;color:#7a7a7a;">↵</span>
<span class="t" style="left:344.60px;top:272.02px;font:400 7.2px/8px 'DejaVu Sans',sans-serif;color:#7a7a7a;">↵</span>
<span class="t" style="left:379.70px;top:272.02px;font:400 7.2px/8px 'DejaVu Sans',sans-serif;color:#7a7a7a;">↵</span>
<span class="t" style="left:413.20px;top:272.02px;font:400 7.2px/8px 'DejaVu Sans',sans-serif;color:#7a7a7a;">↵</span>
<span class="t" style="left:436.70px;top:272.02px;font:400 7.2px/8px 'DejaVu Sans',sans-serif;color:#7a7a7a;">↵</span>
<span class="t" style="left:454.60px;top:272.02px;font:400 7.2px/8px 'DejaVu Sans',sans-serif;color:#7a7a7a;">↵</span>
<span class="t" style="left:502.05px;top:272.02px;font:400 7.2px/8px 'DejaVu Sans',sans-serif;color:#7a7a7a;">↵</span>
<span class="t" style="left:560.40px;top:272.02px;font:400 7.2px/8px 'DejaVu Sans',sans-serif;color:#7a7a7a;">↵</span>
<span class="t" style="left:596.05px;top:272.02px;font:400 7.2px/8px 'DejaVu Sans',sans-serif;color:#7a7a7a;">↵</span>
<span class="t" style="left:637.10px;top:272.02px;font:400 7.2px/8px 'DejaVu Sans',sans-serif;color:#7a7a7a;">↵</span>
<span class="t" style="left:678.00px;top:272.02px;font:400 7.2px/8px 'DejaVu Sans',sans-serif;color:#7a7a7a;">↵</span>
<span class="t" style="left:712.20px;top:272.02px;font:400 7.2px/8px 'DejaVu Sans',sans-serif;color:#7a7a7a;">↵</span>
<span class="t" style="left:749.85px;top:272.02px;font:400 7.2px/8px 'DejaVu Sans',sans-serif;color:#7a7a7a;">↵</span>
<span class="t" style="left:780.25px;top:272.02px;font:400 7.2px/8px 'DejaVu Sans',sans-serif;color:#7a7a7a;">↵</span>
<span class="t" style="left:804.20px;top:272.02px;font:400 7.2px/8px 'DejaVu Sans',sans-serif;color:#7a7a7a;">↵</span>
<span class="t" style="left:834.10px;top:272.02px;font:400 7.2px/8px 'DejaVu Sans',sans-serif;color:#7a7a7a;">↵</span>
<span class="t" style="left:254.50px;top:286.06px;font:400 7.2px/8px 'DejaVu Sans',sans-serif;color:#7a7a7a;">↵</span>
<span class="t" style="left:283.90px;top:286.06px;font:400 7.2px/8px 'DejaVu Sans',sans-serif;color:#7a7a7a;">↵</span>
<span class="t" style="left:315.15px;top:286.06px;font:400 7.2px/8px 'DejaVu Sans',sans-serif;color:#7a7a7a;">↵</span>
<span class="t" style="left:344.60px;top:286.06px;font:400 7.2px/8px 'DejaVu Sans',sans-serif;color:#7a7a7a;">↵</span>
<span class="t" style="left:379.70px;top:286.06px;font:400 7.2px/8px 'DejaVu Sans',sans-serif;color:#7a7a7a;">↵</span>
<span class="t" style="left:413.20px;top:286.06px;font:400 7.2px/8px 'DejaVu Sans',sans-serif;color:#7a7a7a;">↵</span>
<span class="t" style="left:436.70px;top:286.06px;font:400 7.2px/8px 'DejaVu Sans',sans-serif;color:#7a7a7a;">↵</span>
<span class="t" style="left:454.60px;top:286.06px;font:400 7.2px/8px 'DejaVu Sans',sans-serif;color:#7a7a7a;">↵</span>
<span class="t" style="left:502.05px;top:286.06px;font:400 7.2px/8px 'DejaVu Sans',sans-serif;color:#7a7a7a;">↵</span>
<span class="t" style="left:560.40px;top:286.06px;font:400 7.2px/8px 'DejaVu Sans',sans-serif;color:#7a7a7a;">↵</span>
<span class="t" style="left:596.05px;top:286.06px;font:400 7.2px/8px 'DejaVu Sans',sans-serif;color:#7a7a7a;">↵</span>
<span class="t" style="left:637.10px;top:286.06px;font:400 7.2px/8px 'DejaVu Sans',sans-serif;color:#7a7a7a;">↵</span>
<span class="t" style="left:678.00px;top:286.06px;font:400 7.2px/8px 'DejaVu Sans',sans-serif;color:#7a7a7a;">↵</span>
<span class="t" style="left:712.20px;top:286.06px;font:400 7.2px/8px 'DejaVu Sans',sans-serif;color:#7a7a7a;">↵</span>
<span class="t" style="left:749.85px;top:286.06px;font:400 7.2px/8px 'DejaVu Sans',sans-serif;color:#7a7a7a;">↵</span>
<span class="t" style="left:780.25px;top:286.06px;font:400 7.2px/8px 'DejaVu Sans',sans-serif;color:#7a7a7a;">↵</span>
<span class="t" style="left:804.20px;top:286.06px;font:400 7.2px/8px 'DejaVu Sans',sans-serif;color:#7a7a7a;">↵</span>
<span class="t" style="left:834.10px;top:286.06px;font:400 7.2px/8px 'DejaVu Sans',sans-serif;color:#7a7a7a;">↵</span>
<span class="t" style="left:254.50px;top:300.10px;font:400 7.2px/8px 'DejaVu Sans',sans-serif;color:#7a7a7a;">↵</span>
<span class="t" style="left:283.90px;top:300.10px;font:400 7.2px/8px 'DejaVu Sans',sans-serif;color:#7a7a7a;">↵</span>
<span class="t" style="left:315.15px;top:300.10px;font:400 7.2px/8px 'DejaVu Sans',sans-serif;color:#7a7a7a;">↵</span>
<span class="t" style="left:344.60px;top:300.10px;font:400 7.2px/8px 'DejaVu Sans',sans-serif;color:#7a7a7a;">↵</span>
<span class="t" style="left:379.70px;top:300.10px;font:400 7.2px/8px 'DejaVu Sans',sans-serif;color:#7a7a7a;">↵</span>
<span class="t" style="left:413.20px;top:300.10px;font:400 7.2px/8px 'DejaVu Sans',sans-serif;color:#7a7a7a;">↵</span>
<span class="t" style="left:436.70px;top:300.10px;font:400 7.2px/8px 'DejaVu Sans',sans-serif;color:#7a7a7a;">↵</span>
<span class="t" style="left:454.60px;top:300.10px;font:400 7.2px/8px 'DejaVu Sans',sans-serif;color:#7a7a7a;">↵</span>
<span class="t" style="left:502.05px;top:300.10px;font:400 7.2px/8px 'DejaVu Sans',sans-serif;color:#7a7a7a;">↵</span>
<span class="t" style="left:560.40px;top:300.10px;font:400 7.2px/8px 'DejaVu Sans',sans-serif;color:#7a7a7a;">↵</span>
<span class="t" style="left:596.05px;top:300.10px;font:400 7.2px/8px 'DejaVu Sans',sans-serif;color:#7a7a7a;">↵</span>
<span class="t" style="left:637.10px;top:300.10px;font:400 7.2px/8px 'DejaVu Sans',sans-serif;color:#7a7a7a;">↵</span>
<span class="t" style="left:678.00px;top:300.10px;font:400 7.2px/8px 'DejaVu Sans',sans-serif;color:#7a7a7a;">↵</span>
<span class="t" style="left:712.20px;top:300.10px;font:400 7.2px/8px 'DejaVu Sans',sans-serif;color:#7a7a7a;">↵</span>
<span class="t" style="left:749.85px;top:300.10px;font:400 7.2px/8px 'DejaVu Sans',sans-serif;color:#7a7a7a;">↵</span>
<span class="t" style="left:780.25px;top:300.10px;font:400 7.2px/8px 'DejaVu Sans',sans-serif;color:#7a7a7a;">↵</span>
<span class="t" style="left:804.20px;top:300.10px;font:400 7.2px/8px 'DejaVu Sans',sans-serif;color:#7a7a7a;">↵</span>
<span class="t" style="left:834.10px;top:300.10px;font:400 7.2px/8px 'DejaVu Sans',sans-serif;color:#7a7a7a;">↵</span>
<span class="t" style="left:254.50px;top:314.14px;font:400 7.2px/8px 'DejaVu Sans',sans-serif;color:#7a7a7a;">↵</span>
<span class="t" style="left:283.90px;top:314.14px;font:400 7.2px/8px 'DejaVu Sans',sans-serif;color:#7a7a7a;">↵</span>
<span class="t" style="left:315.15px;top:314.14px;font:400 7.2px/8px 'DejaVu Sans',sans-serif;color:#7a7a7a;">↵</span>
<span class="t" style="left:344.60px;top:314.14px;font:400 7.2px/8px 'DejaVu Sans',sans-serif;color:#7a7a7a;">↵</span>
<span class="t" style="left:379.70px;top:314.14px;font:400 7.2px/8px 'DejaVu Sans',sans-serif;color:#7a7a7a;">↵</span>
<span class="t" style="left:413.20px;top:314.14px;font:400 7.2px/8px 'DejaVu Sans',sans-serif;color:#7a7a7a;">↵</span>
<span class="t" style="left:436.70px;top:314.14px;font:400 7.2px/8px 'DejaVu Sans',sans-serif;color:#7a7a7a;">↵</span>
<span class="t" style="left:454.60px;top:314.14px;font:400 7.2px/8px 'DejaVu Sans',sans-serif;color:#7a7a7a;">↵</span>
<span class="t" style="left:502.05px;top:314.14px;font:400 7.2px/8px 'DejaVu Sans',sans-serif;color:#7a7a7a;">↵</span>
<span class="t" style="left:560.40px;top:314.14px;font:400 7.2px/8px 'DejaVu Sans',sans-serif;color:#7a7a7a;">↵</span>
<span class="t" style="left:596.05px;top:314.14px;font:400 7.2px/8px 'DejaVu Sans',sans-serif;color:#7a7a7a;">↵</span>
<span class="t" style="left:637.10px;top:314.14px;font:400 7.2px/8px 'DejaVu Sans',sans-serif;color:#7a7a7a;">↵</span>
<span class="t" style="left:678.00px;top:314.14px;font:400 7.2px/8px 'DejaVu Sans',sans-serif;color:#7a7a7a;">↵</span>
<span class="t" style="left:712.20px;top:314.14px;font:400 7.2px/8px 'DejaVu Sans',sans-serif;color:#7a7a7a;">↵</span>
<span class="t" style="left:749.85px;top:314.14px;font:400 7.2px/8px 'DejaVu Sans',sans-serif;color:#7a7a7a;">↵</span>
<span class="t" style="left:780.25px;top:314.14px;font:400 7.2px/8px 'DejaVu Sans',sans-serif;color:#7a7a7a;">↵</span>
<span class="t" style="left:804.20px;top:314.14px;font:400 7.2px/8px 'DejaVu Sans',sans-serif;color:#7a7a7a;">↵</span>
<span class="t" style="left:834.10px;top:314.14px;font:400 7.2px/8px 'DejaVu Sans',sans-serif;color:#7a7a7a;">↵</span>
<span class="t" style="left:254.50px;top:328.18px;font:400 7.2px/8px 'DejaVu Sans',sans-serif;color:#7a7a7a;">↵</span>
<span class="t" style="left:283.90px;top:328.18px;font:400 7.2px/8px 'DejaVu Sans',sans-serif;color:#7a7a7a;">↵</span>
<span class="t" style="left:315.15px;top:328.18px;font:400 7.2px/8px 'DejaVu Sans',sans-serif;color:#7a7a7a;">↵</span>
<span class="t" style="left:344.60px;top:328.18px;font:400 7.2px/8px 'DejaVu Sans',sans-serif;color:#7a7a7a;">↵</span>
<span class="t" style="left:379.70px;top:328.18px;font:400 7.2px/8px 'DejaVu Sans',sans-serif;color:#7a7a7a;">↵</span>
<span class="t" style="left:413.20px;top:328.18px;font:400 7.2px/8px 'DejaVu Sans',sans-serif;color:#7a7a7a;">↵</span>
<span class="t" style="left:436.70px;top:328.18px;font:400 7.2px/8px 'DejaVu Sans',sans-serif;color:#7a7a7a;">↵</span>
<span class="t" style="left:454.60px;top:328.18px;font:400 7.2px/8px 'DejaVu Sans',sans-serif;color:#7a7a7a;">↵</span>
<span class="t" style="left:502.05px;top:328.18px;font:400 7.2px/8px 'DejaVu Sans',sans-serif;color:#7a7a7a;">↵</span>
<span class="t" style="left:560.40px;top:328.18px;font:400 7.2px/8px 'DejaVu Sans',sans-serif;color:#7a7a7a;">↵</span>
<span class="t" style="left:596.05px;top:328.18px;font:400 7.2px/8px 'DejaVu Sans',sans-serif;color:#7a7a7a;">↵</span>
<span class="t" style="left:637.10px;top:328.18px;font:400 7.2px/8px 'DejaVu Sans',sans-serif;color:#7a7a7a;">↵</span>
<span class="t" style="left:678.00px;top:328.18px;font:400 7.2px/8px 'DejaVu Sans',sans-serif;color:#7a7a7a;">↵</span>
<span class="t" style="left:712.20px;top:328.18px;font:400 7.2px/8px 'DejaVu Sans',sans-serif;color:#7a7a7a;">↵</span>
<span class="t" style="left:749.85px;top:328.18px;font:400 7.2px/8px 'DejaVu Sans',sans-serif;color:#7a7a7a;">↵</span>
<span class="t" style="left:780.25px;top:328.18px;font:400 7.2px/8px 'DejaVu Sans',sans-serif;color:#7a7a7a;">↵</span>
<span class="t" style="left:804.20px;top:328.18px;font:400 7.2px/8px 'DejaVu Sans',sans-serif;color:#7a7a7a;">↵</span>
<span class="t" style="left:834.10px;top:328.18px;font:400 7.2px/8px 'DejaVu Sans',sans-serif;color:#7a7a7a;">↵</span>
<span class="t" style="left:254.50px;top:342.22px;font:400 7.2px/8px 'DejaVu Sans',sans-serif;color:#7a7a7a;">↵</span>
<span class="t" style="left:283.90px;top:342.22px;font:400 7.2px/8px 'DejaVu Sans',sans-serif;color:#7a7a7a;">↵</span>
<span class="t" style="left:315.15px;top:342.22px;font:400 7.2px/8px 'DejaVu Sans',sans-serif;color:#7a7a7a;">↵</span>
<span class="t" style="left:344.60px;top:342.22px;font:400 7.2px/8px 'DejaVu Sans',sans-serif;color:#7a7a7a;">↵</span>
<span class="t" style="left:379.70px;top:342.22px;font:400 7.2px/8px 'DejaVu Sans',sans-serif;color:#7a7a7a;">↵</span>
<span class="t" style="left:413.20px;top:342.22px;font:400 7.2px/8px 'DejaVu Sans',sans-serif;color:#7a7a7a;">↵</span>
<span class="t" style="left:436.70px;top:342.22px;font:400 7.2px/8px 'DejaVu Sans',sans-serif;color:#7a7a7a;">↵</span>
<span class="t" style="left:454.60px;top:342.22px;font:400 7.2px/8px 'DejaVu Sans',sans-serif;color:#7a7a7a;">↵</span>
<span class="t" style="left:502.05px;top:342.22px;font:400 7.2px/8px 'DejaVu Sans',sans-serif;color:#7a7a7a;">↵</span>
<span class="t" style="left:560.40px;top:342.22px;font:400 7.2px/8px 'DejaVu Sans',sans-serif;color:#7a7a7a;">↵</span>
<span class="t" style="left:596.05px;top:342.22px;font:400 7.2px/8px 'DejaVu Sans',sans-serif;color:#7a7a7a;">↵</span>
<span class="t" style="left:637.10px;top:342.22px;font:400 7.2px/8px 'DejaVu Sans',sans-serif;color:#7a7a7a;">↵</span>
<span class="t" style="left:678.00px;top:342.22px;font:400 7.2px/8px 'DejaVu Sans',sans-serif;color:#7a7a7a;">↵</span>
<span class="t" style="left:712.20px;top:342.22px;font:400 7.2px/8px 'DejaVu Sans',sans-serif;color:#7a7a7a;">↵</span>
<span class="t" style="left:749.85px;top:342.22px;font:400 7.2px/8px 'DejaVu Sans',sans-serif;color:#7a7a7a;">↵</span>
<span class="t" style="left:780.25px;top:342.22px;font:400 7.2px/8px 'DejaVu Sans',sans-serif;color:#7a7a7a;">↵</span>
<span class="t" style="left:804.20px;top:342.22px;font:400 7.2px/8px 'DejaVu Sans',sans-serif;color:#7a7a7a;">↵</span>
<span class="t" style="left:834.10px;top:342.22px;font:400 7.2px/8px 'DejaVu Sans',sans-serif;color:#7a7a7a;">↵</span>
<span class="t" style="left:851.20px;top:344.40px;font:400 7.2px/8px 'DejaVu Sans',sans-serif;color:#7a7a7a;">↵</span>
<div class="r" style="left:195.3px;top:61.5px;width:12.50px;height:14.50px;background:#e4e4e4;"></div>
<div class="r" style="left:377.4px;top:43.6px;width:14.30px;height:17.20px;background:#e4e4e4;"></div>
<svg width="1080" height="610" viewBox="0 0 1080 610" style="left:0;top:0"><circle cx="37.2" cy="24.3" r="5.7" fill="none" stroke="#d6e3f5" stroke-width="0.9"/><path d="M34.9 24.3H39.5M37.2 22V26.6" stroke="#eef4fc" stroke-width="1" fill="none"/><path d="M1058.7 20.9L1061.5 23.4M1066.4 20.9L1063.6 23.4M1058.7 27.9L1061.5 25.4M1066.4 27.9L1063.6 25.4" stroke="#b9d4fa" stroke-width="1.5" fill="none"/><path d="M11.8 56.6h3.2l0.9 1h4v6.2h-8.1z" fill="#f3b41b"/><path d="M11.8 59h8.1v4.8h-8.1z" fill="#fbc926"/><path d="M11.8 60.6h8.1" stroke="#fde07a" stroke-width="0.5"/><rect x="26.6" y="56.6" width="6" height="7.8" rx="1" fill="none" stroke="#3a3a3a" stroke-width="1"/><path d="M26.6 58.6h6.4M26.6 62h6" stroke="#3a3a3a" stroke-width="0.9"/><rect x="28" y="59.4" width="3.6" height="1.6" fill="#3a3a3a"/><path d="M39.7 56.6h4.6l2.3 2.3v5.4h-6.9z" fill="#fff" stroke="#3a3a3a" stroke-width="1" stroke-linejoin="round"/><path d="M42.3 57.3c0.6 2 1.3 3.6 3.8 4.2M43 58c-0.3 2.6-1.3 4.3-2.8 5.4M40.6 62.6c1.8-0.9 3.6-1.2 5.6-1" stroke="#3a3a3a" stroke-width="0.8" fill="none"/><rect x="71.6" y="57" width="5" height="7.2" rx="0.6" fill="#e8c565"/><rect x="72.9" y="56" width="2.4" height="1.8" rx="0.5" fill="#c9a54a"/><rect x="75" y="59.6" width="3.8" height="4.8" fill="#f7f7f7" stroke="#9b9b9b" stroke-width="0.6"/><rect x="76.6" y="62" width="1.6" height="1.8" fill="#6b7f6b"/><path d="M86.3 56.2L90.8 62M91.3 56.2L86.8 62" stroke="#8d8d8d" stroke-width="0.9" fill="none"/><circle cx="86.6" cy="63" r="1.35" fill="none" stroke="#7f9ac4" stroke-width="0.8"/><circle cx="91" cy="63" r="1.35" fill="none" stroke="#7f9ac4" stroke-width="0.8"/><path d="M98.3 56.5h4.6v6.3h-4.6z" fill="none" stroke="#3a3a3a" stroke-width="1"/><path d="M100.6 57.8h3.7l2.2 2.2v4.3h-5.9z" fill="#fff" stroke="#3a3a3a" stroke-width="1" stroke-linejoin="round"/><path d="M102 62h3.2M102 63.2h3.2" stroke="#666" stroke-width="0.6"/><path d="M102.8 58.8v2h2" stroke="#666" stroke-width="0.6" fill="none"/><path d="M112.2 60.6l2.6-2.4 3 3-2.6 2.6c-1 0.6-2.2-0.3-3-3.2z" fill="#f2c566"/><path d="M114.9 57.6l3.8 3.7" stroke="#4f5f4a" stroke-width="1.3"/><path d="M117.6 58.5l2.2-2" stroke="#c87f7f" stroke-width="1"/><path d="M148.6 58.4h3.9a2.6 2.6 0 0 1 0 5.2h-3.4" fill="none" stroke="#3a3a3a" stroke-width="1"/><path d="M150.6 56.6l-2.2 1.8 2.2 1.5" fill="none" stroke="#3a3a3a" stroke-width="1"/><path d="M167.9 58.4h-3.9a2.6 2.6 0 0 0 0 5.2h3.4" fill="none" stroke="#3a3a3a" stroke-width="1"/><path d="M165.9 56.6l2.2 1.8-2.2 1.5" fill="none" stroke="#3a3a3a" stroke-width="1"/><path d="M254 50.9h3.8l-1.9 2.1z" fill="#555"/><path d="M328.6 50.9h3.8l-1.9 2.1z" fill="#555"/><path d="M226.9 72.2h6.5" stroke="#3a3a3a" stroke-width="0.9"/><path d="M240.2 69.4h8.8" stroke="#3a3a3a" stroke-width="0.8"/><rect x="255" y="72.2" width="8.9" height="1.3" fill="#222"/><path d="M275.4 64.9l3.3 3.3-3.3 3.4-3.3-3.4z" fill="#fff" stroke="#222" stroke-width="0.9" stroke-linejoin="round"/><path d="M272.3 68.3h6.2l-3.1 3.2z" fill="#222"/><path d="M279.3 69.6c0.5 0.7 0.7 1 0.7 1.4a0.7 0.7 0 0 1-1.4 0c0-0.4 0.2-0.7 0.7-1.4z" fill="#222"/><path d="M287.8 66.1l5.4 5.6M293.2 66.1l-5.4 5.6" stroke="#3a3a3a" stroke-width="1.1"/><path d="M294.6 66.3v2.6" stroke="#3a3a3a" stroke-width="1"/><path d="M302.4 66.1l5.4 5.6M307.8 66.1l-5.4 5.6" stroke="#3a3a3a" stroke-width="1.1"/><path d="M309.3 70.2v1.9" stroke="#3a3a3a" stroke-width="1"/><rect x="316.6" y="66.4" width="6.8" height="4.6" fill="none" stroke="#3a3a3a" stroke-width="1"/><rect x="315.6" y="65.4" width="1.9" height="1.9" fill="#3a3a3a"/><rect x="315.6" y="70.1" width="1.9" height="1.9" fill="#3a3a3a"/><rect x="322.5" y="65.4" width="1.9" height="1.9" fill="#3a3a3a"/><rect x="322.5" y="70.1" width="1.9" height="1.9" fill="#3a3a3a"/><circle cx="334.5" cy="69" r="4.3" fill="none" stroke="#666" stroke-width="0.7"/><path d="M332.2 66.8h4.6M334.5 66.8v4.8" stroke="#555" stroke-width="0.8" fill="none"/><path d="M363.7 47.6v9.7" stroke="#9a9a9a" stroke-width="0.8"/><rect x="365" y="49.3" width="4" height="1.8" fill="#b4b4b4"/><rect x="364.6" y="53.1" width="7.6" height="2.5" fill="#3a7ac4"/><path d="M384.5 47.6v9.7" stroke="#9a9a9a" stroke-width="0.8"/><rect x="382.3" y="49.3" width="4.4" height="1.8" fill="#b4b4b4"/><rect x="380.3" y="53.1" width="8.2" height="2.5" fill="#3a7ac4"/><path d="M405.3 47.6v9.7" stroke="#9a9a9a" stroke-width="0.8"/><rect x="400.4" y="49.3" width="4" height="1.8" fill="#b4b4b4"/><rect x="396.8" y="53.1" width="7.6" height="2.5" fill="#3a7ac4"/><rect x="413.2" y="48.4" width="10.6" height="8.4" fill="#a9a9a9"/><rect x="413.9" y="48.4" width="9.2" height="3.2" fill="#dfe6ef"/><path d="M414.6 50h7.8" stroke="#3a7ac4" stroke-width="1"/><path d="M416.2 48.6l-1.8 1.4 1.8 1.4zM420.8 48.6l1.8 1.4-1.8 1.4z" fill="#3a7ac4"/><path d="M413.2 48.4v8.4M423.8 48.4v8.4" stroke="#8a8a8a" stroke-width="0.7"/><path d="M433.4 49.4h6.6M433.4 52.5h6.6M433.4 55.6h6.6" stroke="#3a3a3a" stroke-width="1"/><path d="M431.2 48.2v2.2M430.6 51.6h1.3v1.8h-1.3M430.6 54.8h1.3v1.8h-1.3" stroke="#3a3a3a" stroke-width="0.6" fill="none"/><path d="M447.3 49.2h8.5M447.3 52.5h8.5M447.3 55.8h8.5" stroke="#3a3a3a" stroke-width="1.1"/><path d="M362 65.5h8.8M366.2 68h4.6M366.2 70.5h4.6M362 73h8.8" stroke="#767676" stroke-width="0.8"/><path d="M362.2 67.4l2.5 1.9-2.5 1.9z" fill="#3a3a3a"/><path d="M381.5 65.5h8.8M385.7 68h4.6M385.7 70.5h4.6M381.5 73h8.8" stroke="#767676" stroke-width="0.8"/><path d="M384.2 67.4l-2.5 1.9 2.5 1.9z" fill="#3a3a3a"/><path d="M404.6 65.6h4.4M404.6 68h4.4M404.6 70.6h4.4M401.4 73.2h7.6" stroke="#767676" stroke-width="0.8"/><path d="M402.5 65.4v2.4M402.5 69.8v2.6" stroke="#3a7ac4" stroke-width="0.9"/><path d="M401.1 66.8l1.4-1.9 1.4 1.9zM401.1 71l1.4 1.9 1.4-1.9z" fill="#3a7ac4"/><path d="M412.2 68.2h3l-1.5 1.8z" fill="#444"/><path d="M427.4 68.8h8.6" stroke="#3a3a3a" stroke-width="0.8"/><path d="M427.4 71h8.6M427.4 73.2h8.6" stroke="#9a9a9a" stroke-width="0.8"/><path d="M431.7 65v2.6" stroke="#3a3a3a" stroke-width="0.8"/><path d="M430.5 66.4l1.2-1.6 1.2 1.6z" fill="#3a3a3a"/><path d="M447.3 65.5h8.5M447.3 67.7h8.5" stroke="#767676" stroke-width="0.8"/><path d="M447.3 70h8.5" stroke="#3a3a3a" stroke-width="0.8"/><path d="M451.5 70.4v2.4" stroke="#3a7ac4" stroke-width="0.9"/><path d="M450.2 72l1.3 1.9 1.3-1.9z" fill="#3a7ac4"/><rect x="894.1" y="53.7" width="12" height="13.1" fill="#fff" stroke="#53648f" stroke-width="1.2"/><rect x="896.3" y="56.1" width="7.6" height="1.5" fill="#6f95d6"/><rect x="896.3" y="59.8" width="3.8" height="1.1" fill="#3b5286"/><rect x="896.3" y="62.9" width="3.2" height="1.1" fill="#5c84c6"/><ellipse cx="904.6" cy="64.6" rx="3.3" ry="2.3" fill="#fff" stroke="#8a8a8a" stroke-width="0.8"/><circle cx="903.6" cy="64.6" r="0.9" fill="none" stroke="#9a9a9a" stroke-width="0.5"/><circle cx="905.6" cy="64.6" r="0.9" fill="none" stroke="#9a9a9a" stroke-width="0.5"/><path d="M914.6 54.6c2.6-0.6 4.8-0.2 6.4 1.2 1.6-1.4 3.8-1.8 6.4-1.2v10.6c-2.6-0.5-4.8-0.1-6.4 1.2-1.6-1.3-3.8-1.7-6.4-1.2z" fill="#f9d206" stroke="#1e1a10" stroke-width="1.1" stroke-linejoin="round"/><path d="M921 55.8v10.6" stroke="#1e1a10" stroke-width="1"/><path d="M919.4 56.2v9.2M922.6 56.2v9.2" stroke="#fbe36a" stroke-width="0.8"/><rect x="935.8" y="54.2" width="13.6" height="10.8" rx="0.8" fill="#f6f6f6" stroke="#7c7c7c" stroke-width="1"/><rect x="940.2" y="65.6" width="5.2" height="1.4" fill="#6c6c6c"/><circle cx="942.6" cy="57.6" r="1.3" fill="#6a6a6a"/><path d="M939.6 62.4c0-1.8 1.2-2.6 3-2.6s3 0.8 3 2.6z" fill="#6a6a6a"/><rect x="974.7" y="53.3" width="15.8" height="14" fill="#e9f2fe" stroke="#7ba9e2" stroke-width="1"/><rect x="977" y="55.8" width="11.20" height="10" fill="#a9ccf2"/><rect x="977" y="55.8" width="11.20" height="1.7" fill="#3c82d8"/><path d="M977 59.2h11.20M977 61.5h11.20M977 63.8h11.20" stroke="#eaf3fe" stroke-width="0.7"/><rect x="996.4" y="53.3" width="15.8" height="14" fill="#e9f2fe" stroke="#7ba9e2" stroke-width="1"/><rect x="998.6" y="55.8" width="5.40" height="10" fill="#a9ccf2"/><rect x="998.6" y="55.8" width="5.40" height="1.7" fill="#3c82d8"/><path d="M998.6 59.2h5.40M998.6 61.5h5.40M998.6 63.8h5.40" stroke="#eaf3fe" stroke-width="0.7"/><rect x="1005.2" y="55.8" width="5.40" height="10" fill="#a9ccf2"/><rect x="1005.2" y="55.8" width="5.40" height="1.7" fill="#3c82d8"/><path d="M1005.2 59.2h5.40M1005.2 61.5h5.40M1005.2 63.8h5.40" stroke="#eaf3fe" stroke-width="0.7"/><rect x="1017.6" y="53.3" width="15.8" height="14" fill="#e9f2fe" stroke="#7ba9e2" stroke-width="1"/><rect x="1020" y="55.8" width="3.00" height="10" fill="#a9ccf2"/><rect x="1020" y="55.8" width="3.00" height="1.7" fill="#3c82d8"/><path d="M1020 59.2h3.00M1020 61.5h3.00M1020 63.8h3.00" stroke="#eaf3fe" stroke-width="0.7"/><rect x="1024.4" y="55.8" width="3.00" height="10" fill="#a9ccf2"/><rect x="1024.4" y="55.8" width="3.00" height="1.7" fill="#3c82d8"/><path d="M1024.4 59.2h3.00M1024.4 61.5h3.00M1024.4 63.8h3.00" stroke="#eaf3fe" stroke-width="0.7"/><rect x="1028.8" y="55.8" width="3.00" height="10" fill="#a9ccf2"/><rect x="1028.8" y="55.8" width="3.00" height="1.7" fill="#3c82d8"/><path d="M1028.8 59.2h3.00M1028.8 61.5h3.00M1028.8 63.8h3.00" stroke="#eaf3fe" stroke-width="0.7"/><circle cx="1061.2" cy="59.2" r="3.9" fill="none" stroke="#666" stroke-width="0.9"/><path d="M1064 62l4.8 3.6" stroke="#666" stroke-width="1"/><path d="M59 43v45" stroke="#e7e7e7" stroke-width="0.9"/><path d="M132.3 43v45" stroke="#e7e7e7" stroke-width="0.9"/><path d="M185 43v45" stroke="#e7e7e7" stroke-width="0.9"/><path d="M351 43v45" stroke="#e7e7e7" stroke-width="0.9"/><path d="M467.5 43v45" stroke="#e7e7e7" stroke-width="0.9"/><path d="M882 43v45" stroke="#e7e7e7" stroke-width="0.9"/><path d="M962.4 43v45" stroke="#e7e7e7" stroke-width="0.9"/><path d="M1045.8 43v45" stroke="#e7e7e7" stroke-width="0.9"/><path d="M62.1 101.1l3.8 3.8M65.9 101.1l-3.8 3.8" stroke="#cf1d4b" stroke-width="1"/><path d="M128.6 101.1l3.8 3.8M132.4 101.1l-3.8 3.8" stroke="#cf1d4b" stroke-width="1"/><path d="M207.1 101.1l3.8 3.8M210.9 101.1l-3.8 3.8" stroke="#cf1d4b" stroke-width="1"/><path d="M273.90000000000003 101.1l3.8 3.8M277.7 101.1l-3.8 3.8" stroke="#cf1d4b" stroke-width="1"/><path d="M497.5 101.1l3.8 3.8M501.29999999999995 101.1l-3.8 3.8" stroke="#cf1d4b" stroke-width="1"/><path d="M647.5 101.1l3.8 3.8M651.3 101.1l-3.8 3.8" stroke="#cf1d4b" stroke-width="1"/><path d="M768.9 101.1l3.8 3.8M772.6999999999999 101.1l-3.8 3.8" stroke="#cf1d4b" stroke-width="1"/><circle cx="872.5" cy="102.9" r="3.9" fill="#e9d9df" stroke="#f4f4f4" stroke-width="0.8"/><path d="M870.6 101l3.8 3.8M874.4 101l-3.8 3.8" stroke="#b0203f" stroke-width="1"/><path d="M909 604.4h111.7" stroke="#e0e0e0" stroke-width="0.9"/><path d="M909 604.4h20.6" stroke="#9a9a9a" stroke-width="1"/><rect x="928.6" y="601.8" width="1.9" height="5.2" fill="#8f8f8f"/><path d="M1037.4 600.3v8.6" stroke="#d8d8d8" stroke-width="0.8"/></svg>
<span class="t" style="left:197.46px;top:62.32px;font:700 9.8px/11.76px 'Liberation Sans', sans-serif;color:#222;">B</span>
<span class="t" style="left:213.33px;top:62.54px;font:400 10.6px/12.72px 'Liberation Serif', serif;color:#333;font-style:italic;">I</span>
<span class="t" style="left:226.89px;top:62.94px;font:400 8.6px/10.32px 'Liberation Sans', sans-serif;color:#333;">U</span>
<span class="t" style="left:241.73px;top:64.34px;font:400 8.6px/10.32px 'Liberation Sans', sans-serif;color:#444;">S</span>
<span class="t" style="left:256.56px;top:63.22px;font:400 8.8px/10.56px 'Liberation Sans', sans-serif;color:#222;">A</span>
</body></html>
